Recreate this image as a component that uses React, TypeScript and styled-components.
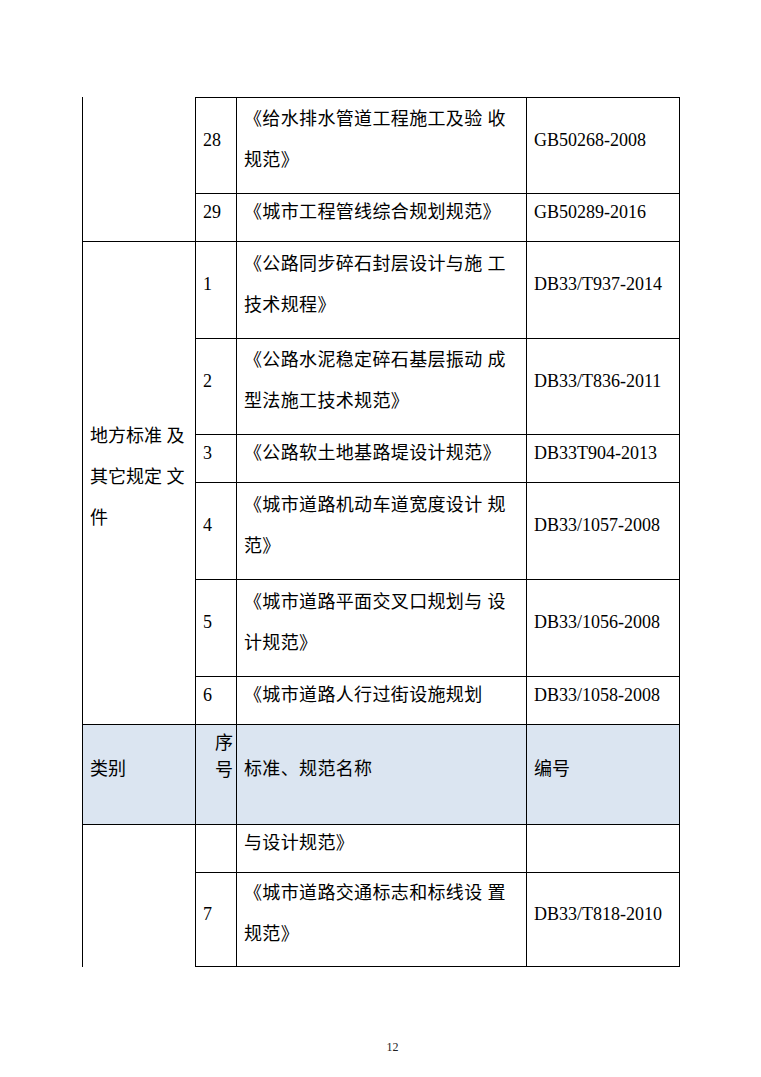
import React from 'react';
import styled, { createGlobalStyle } from 'styled-components';

const GlobalStyle = createGlobalStyle`
  html, body {
    margin: 0;
    padding: 0;
    background: #fff;
  }
`;

const Page = styled.div`
  width: 761px;
  min-height: 1077px;
  box-sizing: border-box;
  padding: 97px 0 0 82px;
  font-family: 'Liberation Serif', 'Noto Sans CJK SC', serif;
  color: #000;
`;

const Table = styled.div`
  display: grid;
  grid-template-columns: 113px 41px 290px 154px;
  grid-template-rows: 96px 48px 97px 96px 48px 97px 97px 48px 100px 48px 95px;
  width: 598px;
`;

const Cell = styled.div<{
  $col: number;
  $span?: number;
  $noTop?: boolean;
  $bottom?: boolean;
  $head?: boolean;
}>`
  grid-column: ${(p) => p.$col};
  grid-row: span ${(p) => p.$span ?? 1};
  display: flex;
  flex-direction: column;
  justify-content: center;
  box-sizing: border-box;
  min-width: 0;
  padding: 0 7px 11px;
  border-left: 1px solid #000;
  border-top: ${(p) => (p.$noTop ? '0' : '1px solid #000')};
  border-right: ${(p) => (p.$col === 4 ? '1px solid #000' : '0')};
  border-bottom: ${(p) => (p.$bottom ? '1px solid #000' : '0')};
  background: ${(p) => (p.$head ? '#dbe5f1' : 'transparent')};
  font-size: 18px;
  line-height: 41px;
  letter-spacing: ${(p) => (p.$col === 3 ? '0.35px' : '0')};
`;

const SeqHead = styled(Cell)`
  padding: 0 3px 36px 0;
  line-height: 27px;
  text-align: right;
`;

const Line = styled.span`
  display: block;
  white-space: nowrap;
`;

const Footer = styled.div`
  width: 598px;
  padding: 73px 0 0 23px;
  box-sizing: border-box;
  text-align: center;
  font-size: 12px;
  line-height: 14px;
  color: #222;
`;

interface Entry {
  no: string;
  name: string[];
  code: string;
}

interface Group {
  category: string[];
  noTop?: boolean;
  open?: boolean;
  entries: Entry[];
}

const before: Group[] = [
  {
    category: [],
    noTop: true,
    entries: [
      { no: '28', name: ['《给水排水管道工程施工及验 收', '规范》'], code: 'GB50268-2008' },
      { no: '29', name: ['《城市工程管线综合规划规范》'], code: 'GB50289-2016' },
    ],
  },
  {
    category: ['地方标准 及', '其它规定 文', '件'],
    entries: [
      { no: '1', name: ['《公路同步碎石封层设计与施 工', '技术规程》'], code: 'DB33/T937-2014' },
      { no: '2', name: ['《公路水泥稳定碎石基层振动 成', '型法施工技术规范》'], code: 'DB33/T836-2011' },
      { no: '3', name: ['《公路软土地基路堤设计规范》'], code: 'DB33T904-2013' },
      { no: '4', name: ['《城市道路机动车道宽度设计 规', '范》'], code: 'DB33/1057-2008' },
      { no: '5', name: ['《城市道路平面交叉口规划与 设', '计规范》'], code: 'DB33/1056-2008' },
      { no: '6', name: ['《城市道路人行过街设施规划'], code: 'DB33/1058-2008' },
    ],
  },
];

const after: Group[] = [
  {
    category: [],
    open: true,
    entries: [
      { no: '', name: ['与设计规范》'], code: '' },
      { no: '7', name: ['《城市道路交通标志和标线设 置', '规范》'], code: 'DB33/T818-2010' },
    ],
  },
];

const Lines = ({ items }: { items: string[] }) => (
  <>
    {items.map((t, i) => (
      <Line key={i}>{t}</Line>
    ))}
  </>
);

const renderGroup = (g: Group, gi: number) => {
  const n = g.entries.length;
  return (
    <React.Fragment key={gi}>
      <Cell $col={1} $span={n} $noTop={g.noTop}>
        <Lines items={g.category} />
      </Cell>
      {g.entries.map((e, i) => {
        const last = !!g.open && i === n - 1;
        return (
          <React.Fragment key={i}>
            <Cell $col={2} $bottom={last}>
              <Line>{e.no}</Line>
            </Cell>
            <Cell $col={3} $bottom={last}>
              <Lines items={e.name} />
            </Cell>
            <Cell $col={4} $bottom={last}>
              <Line>{e.code}</Line>
            </Cell>
          </React.Fragment>
        );
      })}
    </React.Fragment>
  );
};

export default function App() {
  return (
    <Page>
      <GlobalStyle />
      <Table>
        {before.map((g, i) => renderGroup(g, i))}
        <Cell $col={1} $head>
          <Line>类别</Line>
        </Cell>
        <SeqHead $col={2} $head>
          <Line>序</Line>
          <Line>号</Line>
        </SeqHead>
        <Cell $col={3} $head>
          <Line>标准、规范名称</Line>
        </Cell>
        <Cell $col={4} $head>
          <Line>编号</Line>
        </Cell>
        {after.map((g, i) => renderGroup(g, i + 10))}
      </Table>
      <Footer>12</Footer>
    </Page>
  );
}
